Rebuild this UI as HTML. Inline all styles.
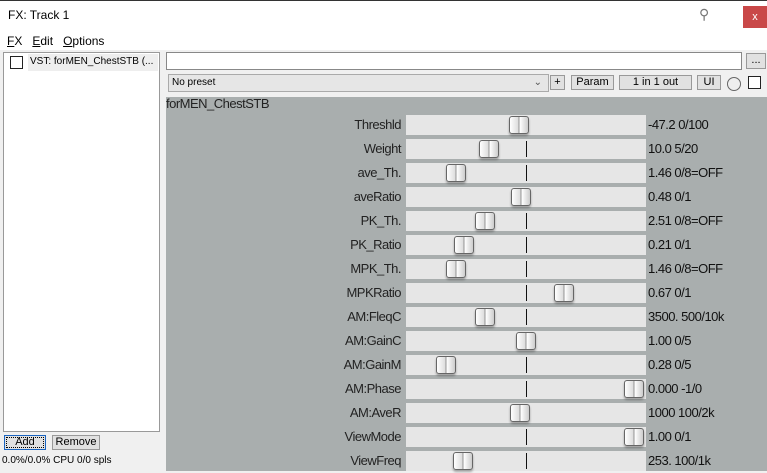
<!DOCTYPE html><html><head><style>
body{margin:0;width:767px;height:473px;background:#f0f0f0;font-family:"Liberation Sans",sans-serif;position:relative;overflow:hidden}
.a{position:absolute}
.t{font-size:12px;color:#000}
.row .lab{position:absolute;right:366px;font-size:13px;color:#222;letter-spacing:-0.5px}
.tr{position:absolute;left:406px;width:240px;height:20px;background:#e6e6e6}
.ln{position:absolute;left:526px;width:1px;height:16px;background:#111}
.th{position:absolute;width:18px;height:16px;border:1px solid #666;border-radius:3px;background:linear-gradient(90deg,#fff,#ddd 45%,#888 50%,#fff 55%,#ccc);box-shadow:0 2px 2px rgba(0,0,0,.3)}
.val{position:absolute;left:648px;font-size:13px;color:#111;letter-spacing:-0.5px}
.btn{position:absolute;background:#e1e1e1;border:1px solid #999;font-size:11px;text-align:center;line-height:13px;height:13px}
</style></head><body>
<div class="a" style="left:0;top:0;width:767px;height:50px;background:#fff"></div>
<div class="a" style="left:0;top:0;width:767px;height:1px;background:#333"></div>
<div class="a t" style="left:8px;top:8px;font-size:12px">FX: Track 1</div>
<div class="a" style="left:699px;top:6px;font-size:14px;color:#777">⚲</div>
<div class="a" style="left:743px;top:6px;width:24px;height:22px;background:#c94848;color:#fff;font-size:11px;text-align:center;line-height:22px">x</div>
<div class="a t" style="left:7px;top:34px"><u>F</u>X &nbsp;&nbsp;<u>E</u>dit &nbsp;&nbsp;<u>O</u>ptions</div>
<div class="a" style="left:3px;top:52px;width:155px;height:378px;background:#fff;border:1px solid #999"></div>
<div class="a" style="left:28px;top:54px;width:130px;height:17px;background:#eee"></div>
<div class="a" style="left:10px;top:56px;width:11px;height:11px;border:1px solid #222;background:#fff"></div>
<div class="a" style="left:30px;top:56px;font-size:10px">VST: forMEN_ChestSTB (...</div>
<div class="btn" style="left:4px;top:435px;width:40px;border:1px solid #1a64c0;outline:1px dotted #000;outline-offset:-3px">Add</div>
<div class="btn" style="left:52px;top:435px;width:46px">Remove</div>
<div class="a" style="left:2px;top:455px;font-size:10px">0.0%/0.0% CPU 0/0 spls</div>
<div class="a" style="left:166px;top:52px;width:574px;height:16px;background:#fff;border:1px solid #888"></div>
<div class="btn" style="left:746px;top:53px;width:18px;height:14px">...</div>
<div class="a" style="left:168px;top:74px;width:376px;height:16px;background:#e6e6e6;border:1px solid #aaa;font-size:10px;line-height:16px;padding-left:3px">No preset<span style="position:absolute;right:6px;color:#555">⌄</span></div>
<div class="btn" style="left:550px;top:75px;width:13px">+</div>
<div class="btn" style="left:571px;top:75px;width:41px">Param</div>
<div class="btn" style="left:619px;top:75px;width:71px">1 in 1 out</div>
<div class="btn" style="left:697px;top:75px;width:22px">UI</div>
<div class="a" style="left:727px;top:77px;width:12px;height:12px;border:1px solid #666;border-radius:50%;background:#eee"></div>
<div class="a" style="left:748px;top:76px;width:11px;height:11px;border:1px solid #222;background:#fff"></div>
<div class="a" style="left:166px;top:97px;width:601px;height:374px;background:#a9aeae"></div>
<div class="a" style="left:166px;top:96px;font-size:13px;color:#222;letter-spacing:-0.5px">forMEN_ChestSTB</div>
<div id="rows"></div>
<script>
var d=[["Threshld","-47.2 0/100",519],["Weight","10.0 5/20",489],["ave_Th.","1.46 0/8=OFF",456],["aveRatio","0.48 0/1",521],["PK_Th.","2.51 0/8=OFF",485],["PK_Ratio","0.21 0/1",464],["MPK_Th.","1.46 0/8=OFF",456],["MPKRatio","0.67 0/1",564],["AM:FleqC","3500. 500/10k",485],["AM:GainC","1.00 0/5",526],["AM:GainM","0.28 0/5",446],["AM:Phase","0.000 -1/0",634],["AM:AveR","1000 100/2k",520],["ViewMode","1.00 0/1",634],["ViewFreq","253. 100/1k",463]];
var h="";d.forEach(function(r,i){var y=115+i*24;
h+='<div class="row"><div class="lab" style="top:'+(y+2)+'px">'+r[0]+'</div></div><div class="tr" style="top:'+y+'px"></div><div class="ln" style="top:'+(y+2)+'px"></div><div class="th" style="left:'+(r[2]-10)+'px;top:'+(y+1)+'px"></div><div class="val" style="top:'+(y+2)+'px">'+r[1]+'</div>';});
document.getElementById("rows").innerHTML=h;
</script>
</body></html>
